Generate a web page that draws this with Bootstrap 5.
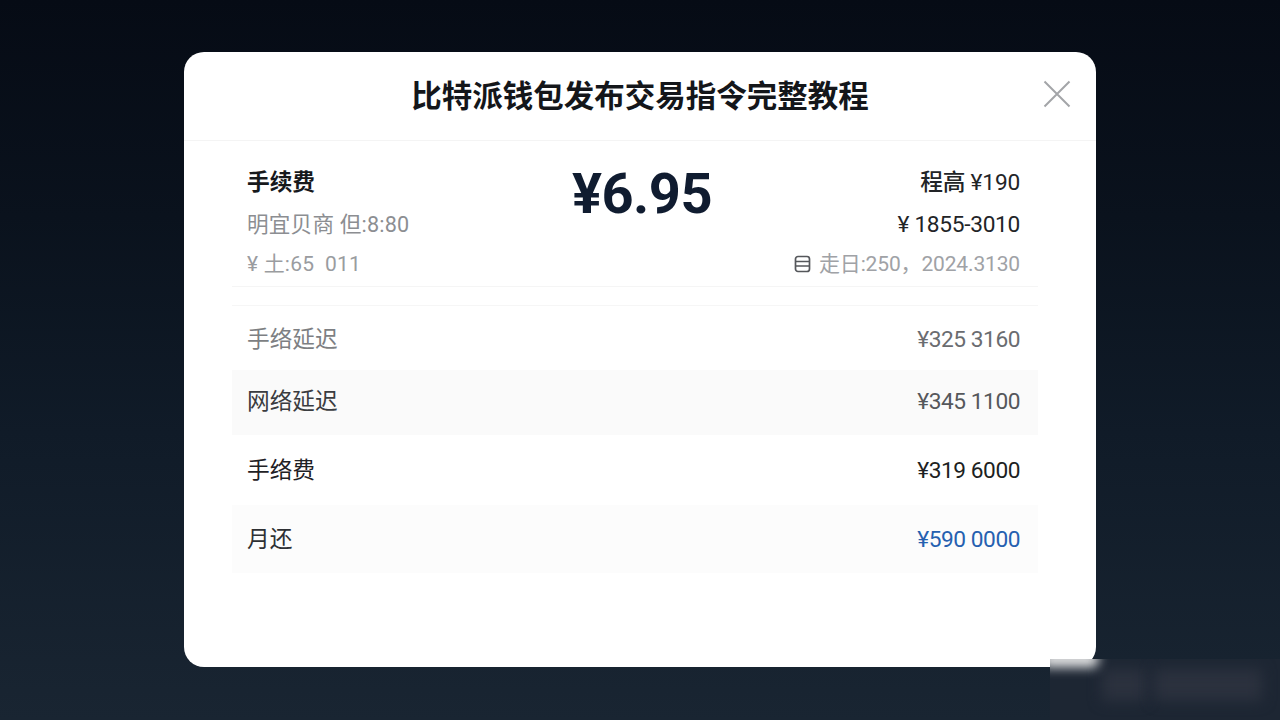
<!doctype html>
<html lang="zh-CN">
<head>
<meta charset="utf-8">
<title>比特派钱包发布交易指令完整教程</title>
<link rel="stylesheet" href="https://cdn.jsdelivr.net/npm/bootstrap@5.3.0/dist/css/bootstrap.min.css">
<style>
html,body{height:100%}
body{margin:0;width:1280px;height:720px;overflow:hidden;font-family:"Roboto","Noto Sans CJK SC",sans-serif;
 background:linear-gradient(180deg,#060b15 0%,#0a121d 30%,#101b28 60%,#192532 100%);position:relative}
.stage{height:720px;padding-top:52px}
.sheet{width:912px;height:615px;background:#fff;border-radius:20px;margin:0 auto}
.sheet-head{height:89px;border-bottom:1px solid #f4f4f4;padding-bottom:3px}
.sheet-title{font-size:30.5px;font-weight:700;color:#14161a;margin:0;line-height:1;font-family:"Noto Sans CJK SC",sans-serif}
.closer{right:24px;top:27px;width:30px;height:30px;border:0;background:none;padding:0}
.summary{margin:0 58px 0 48px;padding:25px 18px 0 15px;height:146px;border-bottom:1px solid #f5f5f5;position:relative}
.big-price{left:0;right:0;top:20px;text-align:center;font-size:56px;font-weight:700;line-height:66px;color:#101c30;letter-spacing:-.5px;padding-left:14px}
.line-a,.line-b,.line-c{height:40px;line-height:34px;white-space:nowrap}
.line-a{font-size:22.7px;font-weight:600;color:#17191c;height:42px}
.line-b{font-size:21.6px;color:#8c8e92;letter-spacing:.2px}
.line-c{font-size:21px;color:#9a9ca0;letter-spacing:.2px;height:39px;margin-top:-1px}
.end-a{font-size:22.7px;color:#222427;font-weight:400;letter-spacing:-.2px}
.end-a b{font-weight:500}
.end-b{font-size:22.7px;color:#222427;letter-spacing:-.3px}
.end-c{font-size:21px;color:#a0a2a6;letter-spacing:-.15px}
.rows{margin:18px 58px 0 48px;border-top:1px solid #f6f6f6}
.fee-row{padding:0 18px 0 15px;font-size:22.7px}
.fee-row .amt{letter-spacing:-.45px}
.r1{height:64px;color:#7d7f83;padding-top:4px}
.r2{height:65px;background:#fafafa;color:#3a3c40}
.r3{height:70px;color:#1f2125;padding-top:2px}
.r4{height:68px;background:#fcfcfc;color:#2e3034;padding-top:2px}
.r1 .amt{color:#6a6c70}.r2 .amt{color:#55575b}.r3 .amt{color:#1d1f22}.r4 .amt{color:#2560b0}
.mark-patch{right:0;bottom:0;width:230px;height:61px;background:#1d2633;overflow:hidden}
.mark-fade{left:-8px;top:-8px;width:56px;height:16px;background:#eee;filter:blur(6px)}
.mark-blob{top:10px;height:32px;background:#2b313e;filter:blur(7px)}
.b1{left:52px;width:44px}.b2{left:104px;width:108px}
</style>
</head>
<body>
<div class="stage">
  <div class="sheet position-relative">
    <div class="sheet-head d-flex align-items-center justify-content-center position-relative">
      <h1 class="sheet-title">比特派钱包发布交易指令完整教程</h1>
      <button class="closer position-absolute" type="button" aria-label="关闭">
        <svg width="30" height="30" viewBox="0 0 30 30"><path d="M2.5 2.5 27.5 27.5M27.5 2.5 2.5 27.5" stroke="#a3a5a8" stroke-width="2" fill="none"/></svg>
      </button>
    </div>
    <div class="summary d-flex justify-content-between">
      <div class="big-price position-absolute">¥6.95</div>
      <div>
        <div class="line-a">手续费</div>
        <div class="line-b">明宜贝商 但:8:80</div>
        <div class="line-c">¥ 土:65&nbsp; 011</div>
      </div>
      <div class="text-end">
        <div class="line-a end-a"><b>程高</b> ¥190</div>
        <div class="line-b end-b">¥ 1855-3010</div>
        <div class="line-c end-c d-flex align-items-start justify-content-end gap-2">
          <svg class="mt-2" width="17" height="18" viewBox="0 0 17 18"><rect x="1.5" y="1.5" width="14" height="15" rx="2.5" fill="none" stroke="#55575b" stroke-width="1.7"/><path d="M2 6.5h13M2 11h13" stroke="#55575b" stroke-width="1.5"/></svg>
          <span>走日:250，2024.3130</span>
        </div>
      </div>
    </div>
    <div class="rows">
      <div class="fee-row r1 d-flex align-items-center justify-content-between"><span>手络延迟</span><span class="amt">¥325 3160</span></div>
      <div class="fee-row r2 d-flex align-items-center justify-content-between"><span>网络延迟</span><span class="amt">¥345 1100</span></div>
      <div class="fee-row r3 d-flex align-items-center justify-content-between"><span>手络费</span><span class="amt">¥319 6000</span></div>
      <div class="fee-row r4 d-flex align-items-center justify-content-between"><span>月还</span><span class="amt">¥590 0000</span></div>
    </div>
  </div>
</div>
<div class="mark-patch position-absolute">
  <div class="mark-fade position-absolute"></div>
  <div class="mark-blob b1 position-absolute"></div>
  <div class="mark-blob b2 position-absolute"></div>
</div>
<script src="https://cdn.jsdelivr.net/npm/bootstrap@5.3.0/dist/js/bootstrap.bundle.min.js"></script>
</body>
</html>
